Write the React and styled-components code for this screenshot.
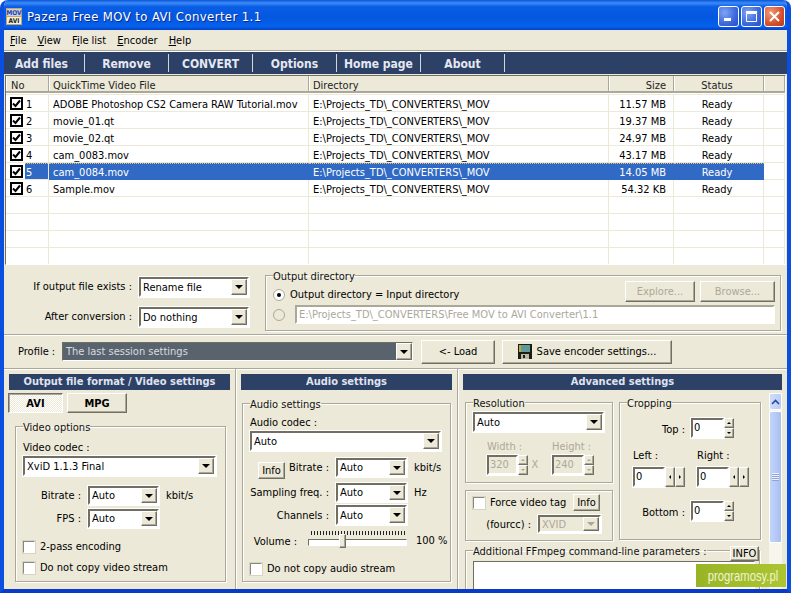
import React from 'react'
import styled, { createGlobalStyle } from 'styled-components'

const GlobalStyle = createGlobalStyle`
  html, body { margin: 0; padding: 0; background: #fff; }
  * { box-sizing: border-box; }
  body {
    font-family: "DejaVu Sans Condensed", "DejaVu Sans", Tahoma, sans-serif;
    font-stretch: condensed;
    font-size: 11px;
    color: #000;
  }
`

const FACE = '#ece9d8'
const NAVY = '#2d4066'
const RAISED = 'border: 1px solid; border-color: #fff #716f64 #716f64 #fff; box-shadow: inset -1px -1px 0 #aca899;'
const SUNKEN = 'border: 2px solid; border-color: #716f64 #fff #fff #716f64; outline: 1px solid #fff; outline-offset: 0;'

const Window = styled.div`
  position: relative;
  width: 791px;
  height: 593px;
  overflow: hidden;
  background: ${FACE};
  border-radius: 8px 8px 0 0;
  border-left: 4px solid #0a4fe0;
  border-right: 4px solid #0a4fe0;
  border-bottom: 4px solid #0a3bc8;
`
const TitleBar = styled.div`
  height: 30px;
  margin: 0 -4px;
  padding: 3px 6px 0 6px;
  display: flex;
  align-items: center;
  background: linear-gradient(#0a53d8 0%, #3b8cf6 10%, #0a5ee6 22%, #0458e0 60%, #0561ec 88%, #0442c8 100%);
`
const TitleText = styled.div`
  flex: 1;
  margin-left: 5px;
  color: #fff;
  font-size: 13px;
  letter-spacing: 0.4px;
  text-shadow: 1px 1px 0 #0a2a90;
`
const CapButton = styled.div`
  width: 21px;
  height: 21px;
  border: 1px solid #fff;
  border-radius: 3px;
  display: flex;
  align-items: center;
  justify-content: center;
  background: ${p => p.$close
    ? 'radial-gradient(circle at 30% 30%, #ee9a78, #d8502c 60%, #b43a18)'
    : 'radial-gradient(circle at 30% 30%, #7fa4f4, #3c68dc 60%, #2a4cc4)'};
  margin-left: 2px;
`
const MenuBar = styled.div`
  height: 21px;
  padding: 0 6px;
  display: flex;
  align-items: center;
  gap: 11px;
  border-bottom: 1px solid #aca899;
  box-shadow: 0 1px 0 #fff;
  u { text-decoration: underline; }
`
const Toolbar = styled.div`
  height: 22px;
  margin-top: 1px;
  background: ${NAVY};
  display: flex;
  align-items: center;
`
const ToolButton = styled.div`
  width: ${p => p.$w || 84}px;
  height: 18px;
  padding-right: ${p => p.$pr || 0}px;
  color: #e4e8f2;
  font-size: 12px;
  font-weight: 700;
  text-align: center;
  line-height: 20px;
  white-space: nowrap;
  border-right: 1px solid #d0d4dc;
`
const ListView = styled.div`
  height: 190px;
  margin: 1px 1px 0 1px;
  background: #fff;
  border: 1px solid;
  border-color: #716f64 #fff #fff #716f64;
  overflow: hidden;
  display: flex;
  flex-direction: column;
`
const ColumnsRow = styled.div`
  display: grid;
  grid-template-columns: 43px 260px 300px 65px 90px 1fr;
  flex: none;
`
const HeaderRow = styled(ColumnsRow)`
  padding-bottom: 1px;
  border-bottom: 1px solid ${FACE};
`
const HeaderCell = styled.div`
  height: 17px;
  line-height: 20px;
  padding: 0 7px 0 ${p => p.$pl || 4}px;
  background: ${FACE};
  border-right: 1px solid #aca899;
  border-bottom: 2px solid #aca899;
  box-shadow: inset 1px 0 0 #fff;
  text-align: ${p => p.$align || 'left'};
  color: #222;
`
const Cell = styled.div`
  height: 17px;
  line-height: ${p => (p.$selected ? 18 : 19)}px;
  padding: 0 7px 0 4px;
  white-space: nowrap;
  overflow: hidden;
  color: ${p => (p.$selected ? '#fff' : '#000')};
  background: ${p => (p.$selected ? '#316ac5' : 'transparent')};
  border-top: ${p => (p.$selected ? '1px dotted #d8c080' : 'none')};
  border-right: 1px solid ${p => (p.$selected ? '#316ac5' : FACE)};
  border-bottom: 1px solid ${p => (p.$selected ? '#316ac5' : FACE)};
  text-align: ${p => p.$align || 'left'};
`
const NoCell = styled.div`
  height: 17px;
  padding-left: 4px;
  display: flex;
  align-items: center;
  gap: 2px;
  border-right: 1px solid ${FACE};
  border-bottom: 1px solid ${FACE};
`
const RowNumber = styled.span`
  flex: 1;
  height: 16px;
  overflow: hidden;
  line-height: ${p => (p.$selected ? 18 : 19)}px;
  padding-left: 1px;
  color: ${p => (p.$selected ? '#fff' : '#000')};
  background: ${p => (p.$selected ? '#316ac5' : 'transparent')};
  border-top: ${p => (p.$selected ? '1px dotted #d8c080' : 'none')};
`
const RowCheck = styled.div`
  width: 13px;
  height: 13px;
  flex: none;
  border: 2px solid #000;
  background: #fff;
  display: flex;
  align-items: center;
  justify-content: center;
`
const Etched = styled.div`
  border-top: 1px solid #aca899;
  box-shadow: inset 0 1px 0 #fff;
`
const OutputPanel = styled.div`
  height: 69px;
  display: flex;
  padding: 9px 6px 0 0;
`
const OutputLabels = styled.div`
  width: 261px;
  padding-top: 3px;
  display: grid;
  grid-template-columns: 128px 110px;
  column-gap: 7px;
  row-gap: 10px;
  align-content: start;
  justify-items: end;
`
const Label = styled.span`
  white-space: nowrap;
  line-height: 20px;
`
const Select = styled.div`
  width: ${p => (p.$w ? p.$w + 'px' : '100%')};
  height: ${p => p.$h || 20}px;
  background: ${p => (p.$disabled ? FACE : '#fff')};
  ${SUNKEN}
  display: flex;
  align-items: center;
  padding-left: 2px;
  justify-content: space-between;
  color: ${p => (p.$disabled ? '#aca899' : '#000')};
`
const SelectButton = styled.div`
  width: 16px;
  height: 100%;
  flex: none;
  background: ${FACE};
  ${RAISED}
  display: flex;
  align-items: center;
  justify-content: center;
  &::after {
    content: "";
    border-left: 4px solid transparent;
    border-right: 4px solid transparent;
    border-top: 4px solid ${p => (p.$disabled ? '#aca899' : '#000')};
  }
`
const Group = styled.fieldset`
  margin: 0;
  padding: 0 7px 0 7px;
  min-width: 0;
  border: 1px solid #aca899;
  box-shadow: 1px 1px 0 #fff, inset 1px 1px 0 #fff;
  height: ${p => p.$h}px;
  width: ${p => (p.$w ? p.$w + 'px' : 'auto')};
`
const Legend = styled.legend`
  position: relative;
  top: 2px;
  padding: 0;
  color: #111;
  line-height: 12px;
`
const DirGroup = styled(Group)`
  flex: 1;
  margin-top: -5px;
`
const DirRow = styled.div`
  display: flex;
  align-items: center;
  height: 21px;
  gap: 5px;
  margin-top: ${p => p.$mt || 0}px;
`
const DirInput = styled.div`
  flex: 1;
  height: 19px;
  margin: 0 -2px 0 5px;
  border: 2px solid;
  border-color: #aca899 #fff #fff #aca899;
  background: #fff;
  color: #aca899;
  line-height: 15px;
  padding-left: 2px;
  white-space: nowrap;
`
const Radio = styled.span`
  width: 12px;
  height: 12px;
  flex: none;
  margin-top: ${p => (p.$on ? 6 : 0)}px;
  border-radius: 50%;
  background: ${p => (p.$disabled ? FACE : '#fff')};
  border: 1px solid #aca899;
  display: flex;
  align-items: center;
  justify-content: center;
  &::after {
    content: "";
    width: 4px;
    height: 4px;
    border-radius: 50%;
    background: ${p => (p.$on ? '#000' : 'transparent')};
  }
`
const RadioText = styled.span`
  white-space: nowrap;
  margin-top: 6px;
`
const Button = styled.div`
  width: ${p => (p.$w ? p.$w + 'px' : 'auto')};
  height: ${p => p.$h || 21}px;
  flex: none;
  background: ${FACE};
  ${RAISED}
  display: flex;
  align-items: center;
  justify-content: center;
  gap: 5px;
  white-space: nowrap;
  color: ${p => (p.$disabled ? '#aca899' : '#000')};
  font-weight: ${p => (p.$bold ? 700 : 400)};
`
const DirButtons = styled.div`
  flex: 1;
  display: flex;
  justify-content: flex-end;
  gap: 5px;
  margin-right: -2px;
`
const ProfilePanel = styled(Etched)`
  height: 34px;
  display: flex;
  align-items: center;
  padding-left: 14px;
`
const ProfileLabel = styled.span`
  width: 44px;
`
const ProfileSelect = styled.div`
  width: 351px;
  height: 19px;
  margin-right: 8px;
  background: #59636e;
  color: #d8dce0;
  border: 1px solid;
  border-color: #716f64 #fff #fff #716f64;
  display: flex;
  align-items: center;
  justify-content: space-between;
  padding-left: 3px;
`
const SavePanel = styled.div`
  display: flex;
  gap: 7px;
`
const Columns = styled(Etched)`
  display: grid;
  grid-template-columns: 232px 222px 1fr;
  height: 221px;
`
const Column = styled.div`
  border-right: 1px solid #aca899;
  box-shadow: 1px 0 0 #fff;
  padding: 5px 5px 0 5px;
  min-width: 0;
  &:last-child { border-right: none; box-shadow: none; }
`
const Bar = styled.div`
  height: 16px;
  background: ${NAVY};
  color: #dfe3ee;
  font-weight: 700;
  font-size: 11px;
  text-align: center;
  line-height: 16px;
  white-space: nowrap;
`
const Tabs = styled.div`
  display: flex;
  gap: 4px;
  margin: 3px 0 0 -1px;
`
const Tab = styled(Button)`
  ${p => p.$on && `
    border-color: #716f64 #fff #fff #716f64;
    box-shadow: inset 1px 1px 0 #aca899;
    background: repeating-conic-gradient(#fff 0 25%, ${FACE} 0 50%) 0 0 / 2px 2px;
  `}
`
const VideoGroup = styled(Group)`
  margin: 7px 0 0 6px;
  width: 211px;
`
const Caption = styled.div`
  line-height: 12px;
  white-space: nowrap;
  color: ${p => (p.$disabled ? '#aca899' : '#000')};
  margin: ${p => p.$m || '0'};
`
const FormRow = styled.div`
  display: grid;
  grid-template-columns: ${p => p.$cols};
  column-gap: 7px;
  align-items: center;
  margin-top: ${p => p.$mt || 0}px;
`
const RightText = styled.span`
  text-align: right;
  white-space: nowrap;
  padding-right: ${p => p.$pad || 0}px;
`
const VolumeLabel = styled(RightText)`
  padding-top: 3px;
`
const LabelWithInfo = styled.div`
  display: flex;
  justify-content: space-between;
  align-items: center;
  padding-left: 8px;
  white-space: nowrap;
`
const InfoAside = styled(Button)`
  margin: 3px 0 -3px 0;
`
const Unit = styled.span`
  white-space: nowrap;
  margin-left: ${p => p.$ml || 0}px;
  padding-top: ${p => p.$pt || 0}px;
`
const CheckRow = styled.div`
  display: flex;
  align-items: center;
  gap: 5px;
  margin-top: ${p => p.$mt || 0}px;
  white-space: nowrap;
`
const PushRight = styled(Button)`
  margin: 0 5px 0 auto;
`
const Check = styled.span`
  width: 12px;
  height: 12px;
  background: #fff;
  border: 1px solid;
  border-color: #8a887c #fff #fff #8a887c;
  outline: 1px solid #d8d4c4;
  flex: none;
`
const AudioGroup = styled(Group)`
  margin: 7px 0 0 1px;
  width: 209px;
`
const SliderArea = styled.div`
  position: relative;
  height: 17px;
`
const Ticks = styled.div`
  height: 4px;
  margin: 0 1px 0 3px;
  background: repeating-linear-gradient(90deg, #222 0 1px, transparent 1px 3px);
`
const Track = styled.div`
  height: 7px;
  margin-top: 4px;
  background: #fff;
  border: 1px solid;
  border-color: #716f64 #fff #fff #716f64;
`
const Thumb = styled.div`
  position: absolute;
  left: 31px;
  top: 3px;
  width: 7px;
  height: 14px;
  background: ${FACE};
  ${RAISED}
`
const AdvancedBody = styled.div`
  display: flex;
  align-items: flex-start;
  margin-top: 3px;
`
const AdvancedMain = styled.div`
  width: 297px;
  margin-left: 2px;
`
const TopGroups = styled.div`
  display: grid;
  grid-template-columns: 148px 142px;
  column-gap: 6px;
  margin-top: 3px;
`
const Stack = styled.div`
  display: flex;
  flex-direction: column;
  gap: 7px;
`
const ResolutionCombo = styled.div`
  margin-top: 4px;
`
const Spin = styled.div`
  display: flex;
  align-items: center;
`
const SpinInput = styled.div`
  width: ${p => p.$w || 33}px;
  height: 20px;
  background: ${p => (p.$disabled ? FACE : '#fff')};
  ${SUNKEN}
  color: ${p => (p.$disabled ? '#aca899' : '#000')};
  line-height: 15px;
  padding-left: 1px;
`
const SpinButtons = styled.div`
  display: flex;
  flex-direction: ${p => (p.$h ? 'row' : 'column')};
`
const SpinArrow = styled.div`
  width: 10px;
  height: ${p => (p.$h ? 20 : 10)}px;
  background: ${FACE};
  ${RAISED}
  display: flex;
  align-items: center;
  justify-content: center;
  &::after {
    content: "";
    border: 2px solid transparent;
    ${p => `border-${p.$dir}-color: ${p.$disabled ? '#aca899' : '#000'};`}
    ${p => `margin-${p.$dir}: 2px;`}
  }
`
const ResolutionSizes = styled.div`
  display: grid;
  grid-template-columns: 41px 24px 43px;
  margin: 8px 0 0 14px;
  align-items: end;
`
const SizeX = styled.span`
  color: #aca899;
  text-align: center;
  line-height: 20px;
  margin-left: -10px;
`
const CropLayout = styled.div`
  display: grid;
  grid-template-columns: 64px 43px;
  margin-top: ${p => p.$mt}px;
`
const CropLabel = styled(RightText)`
  line-height: 20px;
  padding: 2px 6px 0 0;
  margin-bottom: -2px;
`
const CropSides = styled.div`
  display: flex;
  gap: 12px;
  margin: 2px 0 0 6px;
`
const ScrollBar = styled.div`
  width: 17px;
  height: 196px;
  margin-left: 8px;
  display: flex;
  flex-direction: column;
  background: #f6f5ee;
  gap: 1px;
`
const ScrollButton = styled.div`
  height: 17px;
  border: 1px solid #fff;
  border-radius: 2px;
  background: linear-gradient(90deg, #d0dcfa, #b8ccf8);
  display: flex;
  justify-content: center;
  align-items: center;
`
const ScrollThumb = styled.div`
  height: 132px;
  border: 1px solid #fff;
  border-radius: 2px;
  background: linear-gradient(90deg, #c4d4fa, #b4c8f6 60%, #a8bef0);
  display: flex;
  align-items: center;
  justify-content: center;
`
const Grip = styled.div`
  width: 7px;
  height: 8px;
  background: repeating-linear-gradient(#eef2fe 0 1px, #8ca4dc 1px 2px);
`
const ParamsGroup = styled(Group)`
  position: relative;
  height: 60px;
  margin-top: 3px;
  width: 295px;
`
const ParamsInfo = styled(Button)`
  position: absolute;
  right: 0;
  top: -10px;
`
const ParamsBox = styled.div`
  height: 40px;
  margin: 5px -3px 0 0;
  background: #fff;
  border: 1px solid;
  border-color: #716f64 #fff #fff #716f64;
`
const Watermark = styled.div`
  position: absolute;
  left: 692px;
  top: 564px;
  width: 90px;
  height: 23px;
  background: linear-gradient(90deg, #98b424, #aec532);
  text-align: center;
`
const WatermarkText = styled.span`
  display: inline-block;
  color: #eef4d8;
  font-family: "Liberation Sans", sans-serif;
  font-stretch: normal;
  font-size: 15px;
  line-height: 23px;
  transform: scaleX(0.75);
`
const Text = styled.span`
  white-space: nowrap;
`
const IconText = styled.text`
  font-family: "DejaVu Sans Condensed", "DejaVu Sans", sans-serif;
  font-size: 6.5px;
  font-weight: 700;
  text-anchor: middle;
`

const files = [
  ['ADOBE Photoshop CS2 Camera RAW Tutorial.mov', '11.57 MB'],
  ['movie_01.qt', '19.37 MB'],
  ['movie_02.qt', '24.97 MB'],
  ['cam_0083.mov', '43.17 MB'],
  ['cam_0084.mov', '14.05 MB'],
  ['Sample.mov', '54.32 KB'],
]
const DIR = 'E:\\Projects_TD\\_CONVERTERS\\_MOV'

const Combo = ({ value, w, h, disabled }) => (
  <Select $w={w} $h={h} $disabled={disabled}>
    <Text>{value}</Text>
    <SelectButton $disabled={disabled} />
  </Select>
)

const VSpin = ({ value, disabled, w }) => (
  <Spin>
    <SpinInput $disabled={disabled} $w={w}>{value}</SpinInput>
    <SpinButtons>
      <SpinArrow $dir="bottom" $disabled={disabled} />
      <SpinArrow $dir="top" $disabled={disabled} />
    </SpinButtons>
  </Spin>
)

const HSpin = ({ value }) => (
  <Spin>
    <SpinInput $w={32}>{value}</SpinInput>
    <SpinButtons $h>
      <SpinArrow $h $dir="right" />
      <SpinArrow $h $dir="left" />
    </SpinButtons>
  </Spin>
)

export default function App() {
  return (
    <Window>
      <GlobalStyle />
      <TitleBar>
        <svg width="16" height="17" viewBox="0 0 16 17">
          <rect width="16" height="17" fill="#c8a860" />
          <rect x="1" y="1" width="14" height="7" fill="#c4d0ee" />
          <rect x="1" y="9" width="14" height="7" fill="#f4f0e0" />
          <IconText x="8" y="7" fill="#2a40a0">MOV</IconText>
          <IconText x="8" y="15" fill="#222">AVI</IconText>
        </svg>
        <TitleText>Pazera Free MOV to AVI Converter 1.1</TitleText>
        <CapButton>
          <svg width="11" height="11" viewBox="0 0 11 11"><rect x="1" y="7" width="7" height="3" fill="#fff" /></svg>
        </CapButton>
        <CapButton>
          <svg width="13" height="13" viewBox="0 0 13 13"><path d="M1.500 3.500h10v8h-10z" fill="none" stroke="#fff" /><rect x="1" y="1" width="11" height="2" fill="#fff" /></svg>
        </CapButton>
        <CapButton $close>
          <svg width="13" height="13" viewBox="0 0 13 13"><path d="M2 2l9 9M11 2l-9 9" stroke="#fff" strokeWidth="2" /></svg>
        </CapButton>
      </TitleBar>

      <MenuBar>
        <span><u>F</u>ile</span>
        <span><u>V</u>iew</span>
        <span>F<u>i</u>le list</span>
        <span><u>E</u>ncoder</span>
        <span><u>H</u>elp</span>
      </MenuBar>

      <Toolbar>
        <ToolButton $w={81} $pr={5}>Add files</ToolButton>
        <ToolButton>Remove</ToolButton>
        <ToolButton>CONVERT</ToolButton>
        <ToolButton>Options</ToolButton>
        <ToolButton>Home page</ToolButton>
        <ToolButton>About</ToolButton>
      </Toolbar>

      <ListView>
        <HeaderRow>
          <HeaderCell $pl={5}>No</HeaderCell>
          <HeaderCell>QuickTime Video File</HeaderCell>
          <HeaderCell>Directory</HeaderCell>
          <HeaderCell $align="right">Size</HeaderCell>
          <HeaderCell $align="center">Status</HeaderCell>
          <HeaderCell />
        </HeaderRow>
        {Array.from({ length: 10 }, (_, i) => {
          const f = files[i]
          const sel = i === 4
          return (
            <ColumnsRow key={i}>
              <NoCell>
                {f && (
                  <RowCheck>
                    <svg width="9" height="9" viewBox="0 0 9 9"><path d="M1 4.500l2.500 2.500L8 1.500" fill="none" stroke="#000" strokeWidth="2" /></svg>
                  </RowCheck>
                )}
                {f && <RowNumber $selected={sel}>{i + 1}</RowNumber>}
              </NoCell>
              <Cell $selected={sel}>{f && f[0]}</Cell>
              <Cell $selected={sel}>{f && DIR}</Cell>
              <Cell $selected={sel} $align="right">{f && f[1]}</Cell>
              <Cell $selected={sel} $align="center">{f && 'Ready'}</Cell>
              <Cell />
            </ColumnsRow>
          )
        })}
      </ListView>

      <OutputPanel>
        <OutputLabels>
          <Label>If output file exists :</Label>
          <Combo value="Rename file" w={110} />
          <Label>After conversion :</Label>
          <Combo value="Do nothing" w={110} />
        </OutputLabels>
        <DirGroup $h={62}>
          <Legend>Output directory</Legend>
          <DirRow>
            <Radio $on />
            <RadioText>Output directory = Input directory</RadioText>
            <DirButtons>
              <Button $w={70} $disabled>Explore...</Button>
              <Button $w={75} $disabled>Browse...</Button>
            </DirButtons>
          </DirRow>
          <DirRow $mt={2}>
            <Radio $disabled />
            <DirInput>E:\Projects_TD\_CONVERTERS\Free MOV to AVI Converter\1.1</DirInput>
          </DirRow>
        </DirGroup>
      </OutputPanel>

      <ProfilePanel>
        <ProfileLabel>Profile :</ProfileLabel>
        <ProfileSelect>
          <Text>The last session settings</Text>
          <SelectButton />
        </ProfileSelect>
        <SavePanel>
          <Button $w={74} $h={24}>&lt;- Load</Button>
          <Button $w={170} $h={24}>
            <svg width="14" height="15" viewBox="0 0 14 15">
              <rect width="14" height="15" fill="#1c1c10" />
              <rect x="1" y="1" width="2" height="7" fill="#b8a840" />
              <rect x="3" y="1" width="9" height="7" fill="#5e9a9a" />
              <rect x="3" y="10" width="8" height="5" fill="#b8b8a8" />
              <rect x="5" y="11" width="2" height="3" fill="#1c1c10" />
            </svg>
            Save encoder settings...
          </Button>
        </SavePanel>
      </ProfilePanel>

      <Columns>
        <Column>
          <Bar>Output file format / Video settings</Bar>
          <Tabs>
            <Tab $on $bold $w={55} $h={20}>AVI</Tab>
            <Tab $bold $w={60} $h={20}>MPG</Tab>
          </Tabs>
          <VideoGroup $h={162}>
            <Legend>Video options</Legend>
            <Caption $m="10px 0 2px 0">Video codec :</Caption>
            <Combo value="XviD 1.1.3 Final" w={193} />
            <FormRow $cols="58px 71px auto" $mt={10}>
              <RightText>Bitrate :</RightText>
              <Combo value="Auto" h={19} />
              <Unit>kbit/s</Unit>
            </FormRow>
            <FormRow $cols="58px 71px auto" $mt={4}>
              <RightText>FPS :</RightText>
              <Combo value="Auto" h={19} />
            </FormRow>
            <CheckRow $mt={12}><Check />2-pass encoding</CheckRow>
            <CheckRow $mt={8}><Check />Do not copy video stream</CheckRow>
          </VideoGroup>
        </Column>

        <Column>
          <Bar>Audio settings</Bar>
          <AudioGroup $h={185}>
            <Legend>Audio settings</Legend>
            <Caption $m="8px 0 2px 0">Audio codec :</Caption>
            <Combo value="Auto" w={191} />
            <FormRow $cols="79px 71px auto" $mt={7}>
              <LabelWithInfo>
                <InfoAside $w={27} $h={17}>Info</InfoAside>
                <span>Bitrate :</span>
              </LabelWithInfo>
              <Combo value="Auto" h={19} />
              <Unit>kbit/s</Unit>
            </FormRow>
            <FormRow $cols="79px 71px auto" $mt={6}>
              <RightText>Sampling freq. :</RightText>
              <Combo value="Auto" h={19} />
              <Unit>Hz</Unit>
            </FormRow>
            <FormRow $cols="79px 71px auto" $mt={3}>
              <RightText>Channels :</RightText>
              <Combo value="Auto" h={20} />
            </FormRow>
            <FormRow $cols="51px 99px auto" $mt={6}>
              <VolumeLabel $pad={4}>Volume :</VolumeLabel>
              <SliderArea>
                <Ticks />
                <Track />
                <Thumb />
              </SliderArea>
              <Unit $ml={2} $pt={2}>100 %</Unit>
            </FormRow>
            <CheckRow $mt={14}><Check />Do not copy audio stream</CheckRow>
          </AudioGroup>
        </Column>

        <Column>
          <Bar>Advanced settings</Bar>
          <AdvancedBody>
            <AdvancedMain>
              <TopGroups>
                <Stack>
                  <Group $h={87}>
                    <Legend>Resolution</Legend>
                    <ResolutionCombo>
                      <Combo value="Auto" w={131} />
                    </ResolutionCombo>
                    <ResolutionSizes>
                      <Caption $disabled $m="1px 0 2px 0">Width :</Caption>
                      <span />
                      <Caption $disabled $m="1px 0 2px 0">Height :</Caption>
                      <VSpin value="320" w={31} disabled />
                      <SizeX>X</SizeX>
                      <VSpin value="240" w={32} disabled />
                    </ResolutionSizes>
                  </Group>
                  <Group $h={51}>
                    <CheckRow $mt={3}>
                      <Check />Force video tag
                      <PushRight $w={27} $h={17}>Info</PushRight>
                    </CheckRow>
                    <FormRow $cols="58px 63px" $mt={4}>
                      <RightText>(fourcc) :</RightText>
                      <Combo value="XVID" h={18} disabled />
                    </FormRow>
                  </Group>
                </Stack>
                <Group $h={144}>
                  <Legend>Cropping</Legend>
                  <CropLayout $mt={10}>
                    <CropLabel>Top :</CropLabel>
                    <VSpin value="0" />
                  </CropLayout>
                  <CropSides>
                    <div>
                      <Caption $m="10px 0 5px 0">Left :</Caption>
                      <HSpin value="0" />
                    </div>
                    <div>
                      <Caption $m="10px 0 5px 0">Right :</Caption>
                      <HSpin value="0" />
                    </div>
                  </CropSides>
                  <CropLayout $mt={14}>
                    <CropLabel>Bottom :</CropLabel>
                    <VSpin value="0" />
                  </CropLayout>
                </Group>
              </TopGroups>
              <ParamsGroup>
                <Legend>Additional FFmpeg command-line parameters :</Legend>
                <ParamsInfo $w={29} $h={15}>INFO</ParamsInfo>
                <ParamsBox />
              </ParamsGroup>
            </AdvancedMain>
            <ScrollBar>
              <ScrollButton>
                <svg width="9" height="6" viewBox="0 0 9 6"><path d="M1 5l3.500-3.500L8 5" fill="none" stroke="#2c4a9a" strokeWidth="1.600" /></svg>
              </ScrollButton>
              <ScrollThumb><Grip /></ScrollThumb>
            </ScrollBar>
          </AdvancedBody>
        </Column>
      </Columns>

      <Watermark><WatermarkText>programosy.pl</WatermarkText></Watermark>
    </Window>
  )
}
